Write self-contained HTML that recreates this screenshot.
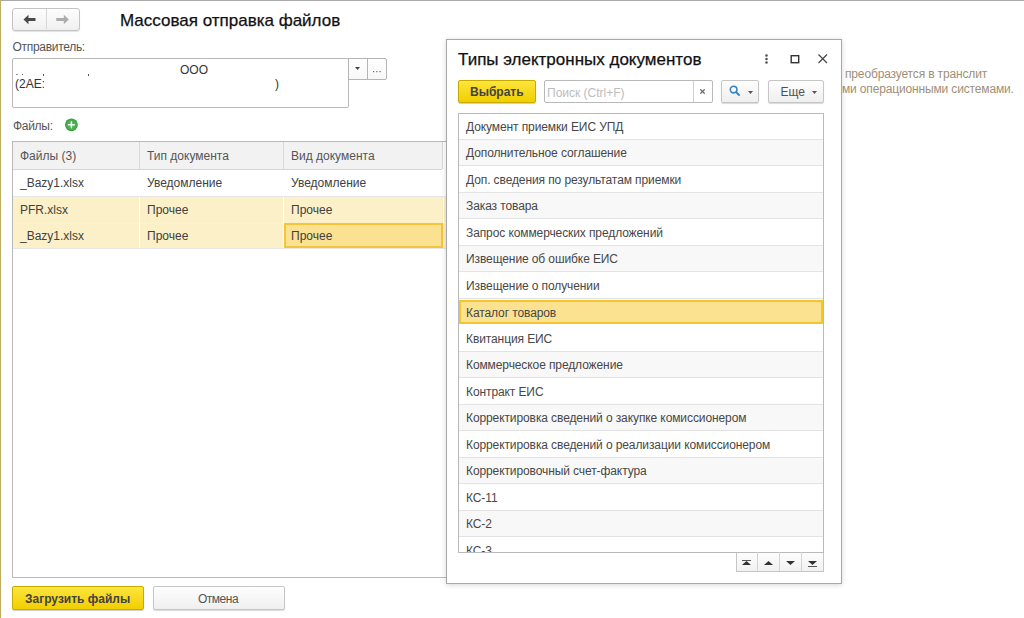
<!DOCTYPE html>
<html><head><meta charset="utf-8">
<style>
*{box-sizing:border-box;margin:0;padding:0}
html,body{width:1024px;height:618px;overflow:hidden;background:#fff;font-family:"Liberation Sans",sans-serif;font-size:12px;color:#333}
.a{position:absolute}
.t{position:absolute;white-space:nowrap;line-height:1}
#topline{left:0;top:0;width:1024px;height:1px;background:#a9a9a9}
#leftline{left:0;top:0;width:1px;height:618px;background:#bfae62}
.navgrp{left:12px;top:8px;width:68px;height:22.5px;border:1px solid #c4c4c4;border-radius:3px;background:linear-gradient(#fdfdfd,#f0f0f0);box-shadow:0 1px 1px rgba(0,0,0,.12)}
.navdiv{left:46px;top:9px;width:1px;height:20px;background:#d8d8d8}
.fld{border:1px solid #b9b9b9;border-radius:2px;background:#fff}
.btn{border:1px solid #c6c6c6;border-radius:2px;background:linear-gradient(#fefefe,#efefef);box-shadow:0 1px 1px rgba(0,0,0,.15)}
.ybtn{border:1px solid #c8ab00;border-radius:2px;background:linear-gradient(#fce53c,#f1cf00);box-shadow:0 1px 1px rgba(0,0,0,.2)}
.tbl{left:12px;top:141px;width:460px;height:437px;border:1px solid #b9b9b9;background:#fff}
.hdr{left:13px;top:142px;width:429px;height:28px;background:#f2f2f2;border-bottom:1px solid #d4d4d4}
.vl{position:absolute;width:1px;background:#dedede}
.hl{position:absolute;height:1px;background:#e6e6e6}
.dlg{left:446px;top:39px;width:396px;height:545px;border:1px solid #a8a8a8;background:#fff;box-shadow:0 1px 5px rgba(0,0,0,.16)}
.list{left:458px;top:113px;width:366px;height:440px;border:1px solid #b9b9b9;background:#fff;overflow:hidden}
.row{position:absolute;left:0;width:364px;height:26.5px;border-bottom:1px solid #e3e3e3}
.row span{position:absolute;left:7px;top:7.7px;white-space:nowrap;line-height:12px;color:#474747;letter-spacing:-0.1px}
.odd{background:#f8f8f8}
.sel{background:#fbe290;border:2px solid #f5c531}
.hint{color:#a08f78;letter-spacing:-0.15px}
</style></head><body>
<div id="topline" class="a"></div>
<div id="leftline" class="a"></div>

<!-- nav buttons -->
<div class="a navgrp"></div>
<div class="a navdiv"></div>
<svg class="a" style="left:23px;top:14px" width="14" height="11" viewBox="0 0 14 11"><path d="M0.5 5.5 L5.5 0.8 L5.5 4 L12.5 4 L12.5 7 L5.5 7 L5.5 10.2 Z" fill="#4a4a4a"/></svg>
<svg class="a" style="left:56px;top:14px" width="14" height="11" viewBox="0 0 14 11"><path d="M12.8 5.5 L7.8 0.8 L7.8 4 L0.3 4 L0.3 7 L7.8 7 L7.8 10.2 Z" fill="#acacac"/></svg>

<div class="t" style="left:120px;top:11.5px;font-size:17px;color:#111;-webkit-text-stroke:0.25px #111">Массовая отправка файлов</div>

<div class="t" style="left:12.5px;top:41px;color:#555;letter-spacing:-0.3px">Отправитель:</div>
<div class="a fld" style="left:12px;top:58px;width:337px;height:50px"></div>
<div class="t" style="left:180px;top:64px;color:#333">ООО</div>
<div class="t" style="left:15px;top:78px;color:#333">(2AE:</div>
<div class="a" style="left:44px;top:76px;width:230px;height:14px;background:#fff"></div>
<div class="t" style="left:275px;top:78px;color:#333">)</div>
<div class="a" style="left:16px;top:74px;width:2px;height:1px;background:#8a8aa0"></div><div class="a" style="left:22px;top:74px;width:1px;height:1px;background:#556"></div><div class="a" style="left:43px;top:74px;width:1px;height:1.5px;background:#6a5a40"></div><div class="a" style="left:88px;top:74px;width:1px;height:1.5px;background:#556"></div>
<div class="a" style="left:348px;top:58px;width:20px;height:22px;border:1px solid #b4b4b4;background:linear-gradient(#fff,#f8f8f8)"></div>
<div class="a" style="left:367px;top:58px;width:20px;height:22px;border:1px solid #b4b4b4;border-radius:0 2px 2px 0;background:linear-gradient(#fff,#f8f8f8)"></div>
<svg class="a" style="left:355px;top:66.5px" width="5" height="3"><path d="M0 0 L5 0 L2.5 3Z" fill="#444"/></svg>
<svg class="a" style="left:371px;top:70px" width="12" height="3"><rect x="2" y="1" width="1.2" height="1.2" fill="#666"/><rect x="5.2" y="1" width="1.2" height="1.2" fill="#666"/><rect x="8.4" y="1" width="1.2" height="1.2" fill="#666"/></svg>

<div class="t" style="left:13px;top:120px;color:#555;letter-spacing:-0.3px">Файлы:</div>
<svg class="a" style="left:64px;top:117.5px" width="14" height="14" viewBox="0 0 14 14"><defs><radialGradient id="gp"><stop offset="0" stop-color="#55bb5f"/><stop offset="0.75" stop-color="#45ad4f"/><stop offset="1" stop-color="#2f9a3c"/></radialGradient></defs><circle cx="7.4" cy="6.8" r="6.4" fill="url(#gp)"/><rect x="3.9" y="6.15" width="7" height="1.4" fill="#fff"/><rect x="6.7" y="3.3" width="1.4" height="7" fill="#fff"/></svg>

<!-- table -->
<div class="a tbl"></div>
<div class="a hdr"></div>
<div class="vl" style="left:139px;top:142px;height:27px;background:#d8d8d8"></div>
<div class="vl" style="left:283px;top:142px;height:27px;background:#d8d8d8"></div>
<div class="vl" style="left:442px;top:142px;height:27px;background:#d8d8d8"></div>
<div class="t" style="left:20px;top:150px;color:#555">Файлы (3)</div>
<div class="t" style="left:147px;top:150px;color:#555">Тип документа</div>
<div class="t" style="left:291px;top:150px;color:#555">Вид документа</div>

<div class="hl" style="left:13px;top:196px;width:440px"></div>
<div class="a" style="left:13px;top:197px;width:440px;height:26px;background:#fcf0c8"></div>
<div class="hl" style="left:13px;top:223px;width:440px;background:#f6f1e4"></div>
<div class="a" style="left:13px;top:224px;width:440px;height:24px;background:#fcf0c8"></div>
<div class="hl" style="left:13px;top:248px;width:440px"></div>
<div class="vl" style="left:139px;top:197px;height:51px;background:#fff"></div>
<div class="vl" style="left:283px;top:197px;height:51px;background:#fff"></div>
<div class="vl" style="left:443px;top:197px;height:26px;background:#fff"></div>
<div class="a" style="left:284px;top:223px;width:159px;height:25px;background:#fbe292;border:2px solid #f4c43a"></div>

<div class="t" style="left:20px;top:177px;color:#404040">_Bazy1.xlsx</div>
<div class="t" style="left:147px;top:177px;color:#404040">Уведомление</div>
<div class="t" style="left:291px;top:177px;color:#404040">Уведомление</div>
<div class="t" style="left:20px;top:204px;color:#404040">PFR.xlsx</div>
<div class="t" style="left:147px;top:204px;color:#404040">Прочее</div>
<div class="t" style="left:291px;top:204px;color:#404040">Прочее</div>
<div class="t" style="left:20px;top:230px;color:#404040">_Bazy1.xlsx</div>
<div class="t" style="left:147px;top:230px;color:#404040">Прочее</div>
<div class="t" style="left:291px;top:230px;color:#404040">Прочее</div>

<!-- bottom buttons -->
<div class="a ybtn" style="left:12px;top:586px;width:132px;height:24px"></div>
<div class="t" style="left:25px;top:593px;font-weight:bold;color:#424242">Загрузить файлы</div>
<div class="a btn" style="left:153px;top:586px;width:132px;height:24px"></div>
<div class="t" style="left:198px;top:593px;color:#555;letter-spacing:-0.5px">Отмена</div>

<!-- hint -->
<div class="t hint" style="left:845px;top:68px">преобразуется в транслит</div>
<div class="t hint" style="left:842px;top:83px">ми операционными системами.</div>

<!-- dialog -->
<div class="a dlg"></div>
<div class="t" style="left:458px;top:50.5px;font-size:17px;color:#111;-webkit-text-stroke:0.25px #111">Типы электронных документов</div>
<svg class="a" style="left:760px;top:50px" width="80" height="18" viewBox="0 0 80 18">
 <circle cx="6.5" cy="5.5" r="1.3" fill="#555"/><circle cx="6.5" cy="9" r="1.3" fill="#555"/><circle cx="6.5" cy="12.5" r="1.3" fill="#555"/>
 <rect x="31.2" y="5.7" width="7.5" height="7" fill="none" stroke="#333" stroke-width="1.4"/>
 <path d="M58.5 4.5 L67 13 M67 4.5 L58.5 13" stroke="#444" stroke-width="1.2"/>
</svg>

<div class="a ybtn" style="left:458px;top:80px;width:78px;height:23px"></div>
<div class="t" style="left:470px;top:86px;font-weight:bold;color:#424242">Выбрать</div>
<div class="a fld" style="left:544px;top:80px;width:169px;height:23px"></div>
<div class="vl" style="left:693px;top:81px;height:21px;background:#cfcfcf"></div>
<div class="t" style="left:547px;top:86.7px;color:#bdbdbd">Поиск (Ctrl+F)</div>
<svg class="a" style="left:700px;top:88.5px" width="5" height="5"><path d="M0.3 0.3 L4.7 4.7 M4.7 0.3 L0.3 4.7" stroke="#707070" stroke-width="1.3"/></svg>
<div class="a btn" style="left:721px;top:80px;width:38px;height:23px"></div>
<svg class="a" style="left:729px;top:85px" width="12" height="12" viewBox="0 0 12 12"><circle cx="4.6" cy="4.6" r="3.3" fill="none" stroke="#3684c6" stroke-width="1.6"/><path d="M7 7 L10.6 10.6" stroke="#3684c6" stroke-width="2"/></svg>
<svg class="a" style="left:748px;top:91px" width="5" height="3"><path d="M0 0 L5 0 L2.5 3Z" fill="#555"/></svg>
<div class="a btn" style="left:768px;top:80px;width:56px;height:23px"></div>
<div class="t" style="left:780.5px;top:86px;color:#505050">Еще</div>
<svg class="a" style="left:812px;top:91px" width="5" height="3"><path d="M0 0 L5 0 L2.5 3Z" fill="#555"/></svg>

<div class="a list">
 <div class="row" style="top:-0.7px"><span>Документ приемки ЕИС УПД</span></div>
 <div class="row odd" style="top:25.8px"><span>Дополнительное соглашение</span></div>
 <div class="row" style="top:52.3px"><span>Доп. сведения по результатам приемки</span></div>
 <div class="row odd" style="top:78.8px"><span>Заказ товара</span></div>
 <div class="row" style="top:105.3px"><span>Запрос коммерческих предложений</span></div>
 <div class="row odd" style="top:131.8px"><span>Извещение об ошибке ЕИС</span></div>
 <div class="row" style="top:158.3px"><span>Извещение о получении</span></div>
 <div class="row sel" style="top:186px;height:24px"><span style="left:5px;top:4.9px">Каталог товаров</span></div>
 <div class="row" style="top:211.3px"><span>Квитанция ЕИС</span></div>
 <div class="row odd" style="top:237.8px"><span>Коммерческое предложение</span></div>
 <div class="row" style="top:264.3px"><span>Контракт ЕИС</span></div>
 <div class="row odd" style="top:290.8px"><span>Корректировка сведений о закупке комиссионером</span></div>
 <div class="row" style="top:317.3px"><span>Корректировка сведений о реализации комиссионером</span></div>
 <div class="row odd" style="top:343.8px"><span>Корректировочный счет-фактура</span></div>
 <div class="row" style="top:370.3px"><span>КС-11</span></div>
 <div class="row odd" style="top:396.8px"><span>КС-2</span></div>
 <div class="row" style="top:423.3px"><span>КС-3</span></div>
</div>

<!-- list nav -->
<div class="a" style="left:736px;top:553px;width:88px;height:19px;border:1px solid #c6c6c6;border-top:none;background:linear-gradient(#fdfdfd,#f1f1f1)"></div>
<div class="vl" style="left:757px;top:552px;height:19px;background:#d4d4d4"></div>
<div class="vl" style="left:779px;top:552px;height:19px;background:#d4d4d4"></div>
<div class="vl" style="left:801px;top:552px;height:19px;background:#d4d4d4"></div>
<svg class="a" style="left:736px;top:552px" width="88" height="20" viewBox="0 0 88 20">
 <rect x="6" y="8" width="9" height="1" fill="#555"/><path d="M6 13 L15 13 L10.5 9Z" fill="#333"/>
 <path d="M28 13 L37 13 L32.5 9Z" fill="#333"/>
 <path d="M50 9 L59 9 L54.5 13Z" fill="#333"/>
 <path d="M72 9 L81 9 L76.5 13Z" fill="#333"/><rect x="72" y="14" width="9" height="1" fill="#555"/>
</svg>
</body></html>
